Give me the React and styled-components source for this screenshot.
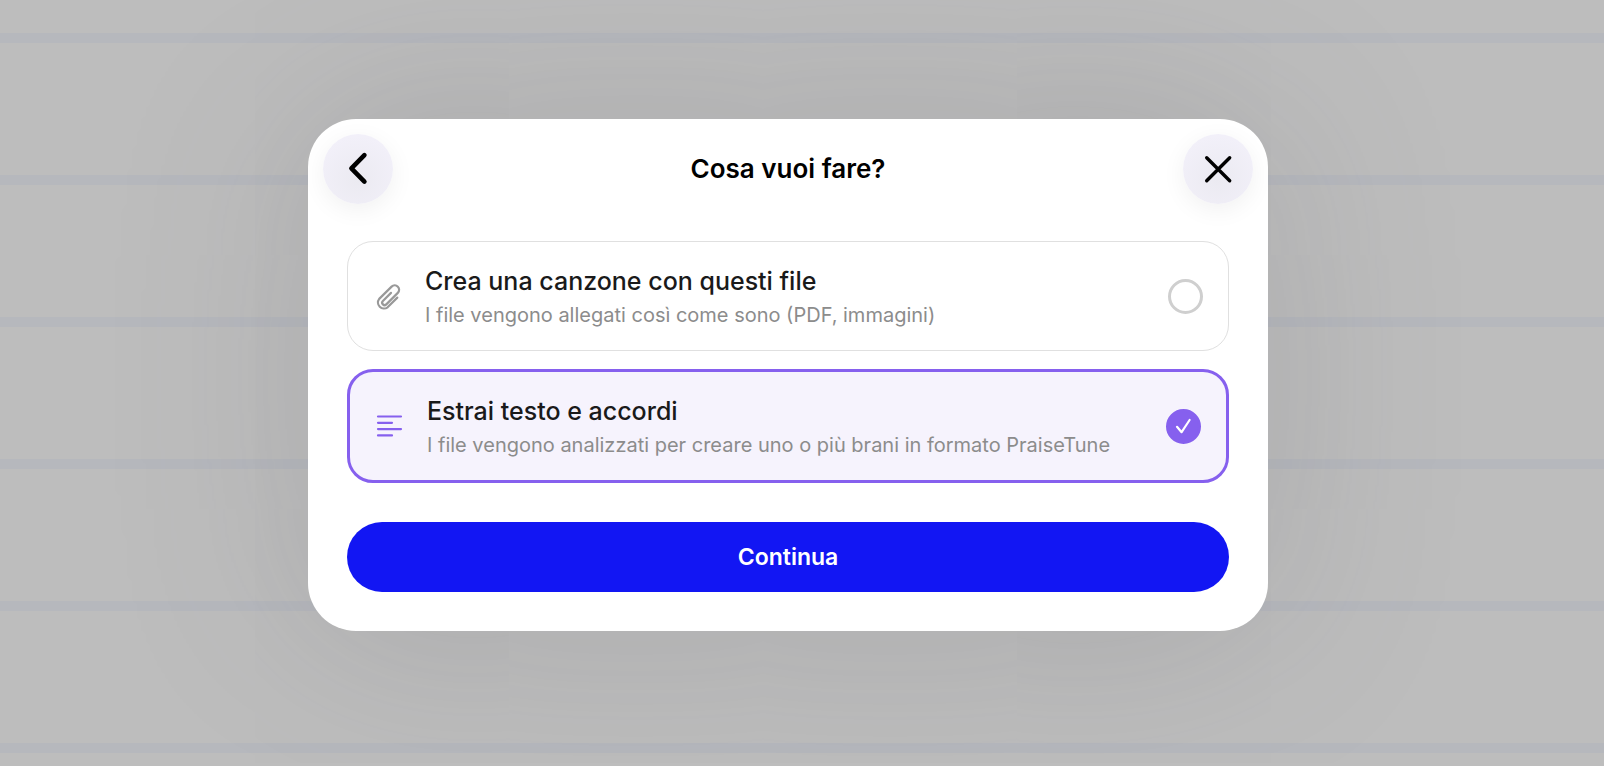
import React, { useState } from "react";
import styled, { createGlobalStyle } from "styled-components";

const GlobalStyle = createGlobalStyle`
  * {
    box-sizing: border-box;
  }
  body {
    margin: 0;
    font-family: Inter, "Liberation Sans", sans-serif;
  }
`;

const Page = styled.div`
  min-height: 100vh;
  padding: 0 28px 16px 0;
  display: flex;
  justify-content: center;
  align-items: center;
  overflow: hidden;
  background: repeating-linear-gradient(
      to bottom,
      #b6b8bd 0,
      #b6b8bd 10px,
      #bdbdbd 10px,
      #bdbdbd 142px
    )
    0 33px;
`;

const Modal = styled.form`
  width: 100%;
  max-width: 960px;
  border-radius: 48px;
  background-color: white;
  box-shadow: 0 0 200px rgba(80, 82, 92, 0.2);
`;

const Header = styled.header`
  display: flex;
  justify-content: space-between;
  align-items: center;
  padding: 15px;
`;

const Title = styled.h1`
  margin: 0;
  font-size: 26px;
  line-height: 32px;
  font-weight: 600;
  color: black;
`;

const RoundButton = styled.button`
  width: 70px;
  height: 70px;
  padding: 0;
  display: flex;
  justify-content: center;
  align-items: center;
  border: none;
  border-radius: 50%;
  color: black;
  background: radial-gradient(circle at 50% 65%, #ebeaf1, #f2f0f9 75%);
  box-shadow: 0 6px 24px rgba(0, 0, 0, 0.06);
  cursor: pointer;
`;

const Body = styled.div`
  padding: 22px 39px 39px;
  display: flex;
  flex-direction: column;
`;

const Options = styled.div`
  display: flex;
  flex-direction: column;
  gap: 18px;
  margin-bottom: 39px;
`;

const Option = styled.label`
  display: flex;
  align-items: center;
  gap: 24px;
  padding: 23px 25px;
  border: ${({ $active }) => ($active ? "3px solid #8660ee" : "1px solid #e0e0e0")};
  border-radius: 26px;
  color: ${({ $active }) => ($active ? "#8660ee" : "#999999")};
  background-color: ${({ $active }) => ($active ? "#f6f3fd" : "white")};
  cursor: pointer;
`;

const OptionIcon = styled.svg`
  width: 28px;
  height: 28px;
  flex: none;
  overflow: visible;
`;

const OptionText = styled.div`
  flex: 1;
`;

const OptionTitle = styled.div`
  font-size: 25px;
  line-height: 32px;
  font-weight: 500;
  color: #1a1a1a;
`;

const OptionDetail = styled.div`
  margin-top: 6px;
  font-size: 20px;
  line-height: 24px;
  color: #8c8c8c;
`;

const Radio = styled.input`
  appearance: none;
  width: 35px;
  height: 35px;
  margin: 0;
  flex: none;
  border: 3px solid #cfcfcf;
  border-radius: 50%;
  cursor: pointer;

  &:checked {
    border-color: #8660ee;
    background-color: #8660ee;
  }
`;

const RadioBox = styled.span`
  position: relative;
  display: flex;
`;

const Check = styled.svg`
  position: absolute;
  inset: 0;
  pointer-events: none;
`;

const Continue = styled.button`
  height: 70px;
  border: none;
  border-radius: 35px;
  font-family: inherit;
  font-size: 23px;
  line-height: 28px;
  font-weight: 600;
  color: white;
  background-color: #1216f3;
  cursor: pointer;
`;

const options = [
  {
    id: "attach",
    title: "Crea una canzone con questi file",
    detail: "I file vengono allegati così come sono (PDF, immagini)",
    icon: (
      <path
        d="M18 10.9L9.9 19A2.4 2.4 0 0 0 13.3 22.4L24.8 10.9A4.4 4.4 0 0 0 18.6 4.6L6.2 16.9A6 6 0 0 0 14.6 25.3L24.3 15.6"
        strokeWidth="2.2"
      />
    ),
  },
  {
    id: "extract",
    title: "Estrai testo e accordi",
    detail:
      "I file vengono analizzati per creare uno o più brani in formato PraiseTune",
    icon: <path d="M3 4.5H26M3 10.8H17M3 17.1H26M3 23.4H17" strokeWidth="2.2" />,
  },
];

const App = () => {
  const [selected, setSelected] = useState("extract");

  return (
    <>
      <GlobalStyle />
      <Page>
        <Modal onSubmit={(e) => e.preventDefault()}>
          <Header>
            <RoundButton type="button" aria-label="Indietro">
              <svg width="36" height="36" fill="none" stroke="currentColor">
                <path
                  d="M24.4 4.2L11.4 17.4L24.4 30.6"
                  strokeWidth="4.6"
                  strokeLinecap="round"
                  strokeLinejoin="round"
                />
              </svg>
            </RoundButton>
            <Title>Cosa vuoi fare?</Title>
            <RoundButton type="button" aria-label="Chiudi">
              <svg width="36" height="36" fill="none" stroke="currentColor">
                <path
                  d="M6.7 6.7L29.7 29.7M29.7 6.7L6.7 29.7"
                  strokeWidth="3.4"
                  strokeLinecap="round"
                />
              </svg>
            </RoundButton>
          </Header>
          <Body>
            <Options>
              {options.map((item) => (
                <Option key={item.id} $active={selected === item.id}>
                  <OptionIcon
                    viewBox="0 0 28 28"
                    fill="none"
                    stroke="currentColor"
                    strokeLinecap="round"
                    strokeLinejoin="round"
                  >
                    {item.icon}
                  </OptionIcon>
                  <OptionText>
                    <OptionTitle>{item.title}</OptionTitle>
                    <OptionDetail>{item.detail}</OptionDetail>
                  </OptionText>
                  <RadioBox>
                    <Radio
                      type="radio"
                      name="action"
                      checked={selected === item.id}
                      onChange={() => setSelected(item.id)}
                    />
                    {selected === item.id && (
                      <Check viewBox="0 0 35 35" fill="none" stroke="white">
                        <path
                          d="M11 17.8L15.6 23.2L23.6 11"
                          strokeWidth="2.2"
                          strokeLinecap="round"
                          strokeLinejoin="round"
                        />
                      </Check>
                    )}
                  </RadioBox>
                </Option>
              ))}
            </Options>
            <Continue type="submit">Continua</Continue>
          </Body>
        </Modal>
      </Page>
    </>
  );
};

export default App;
